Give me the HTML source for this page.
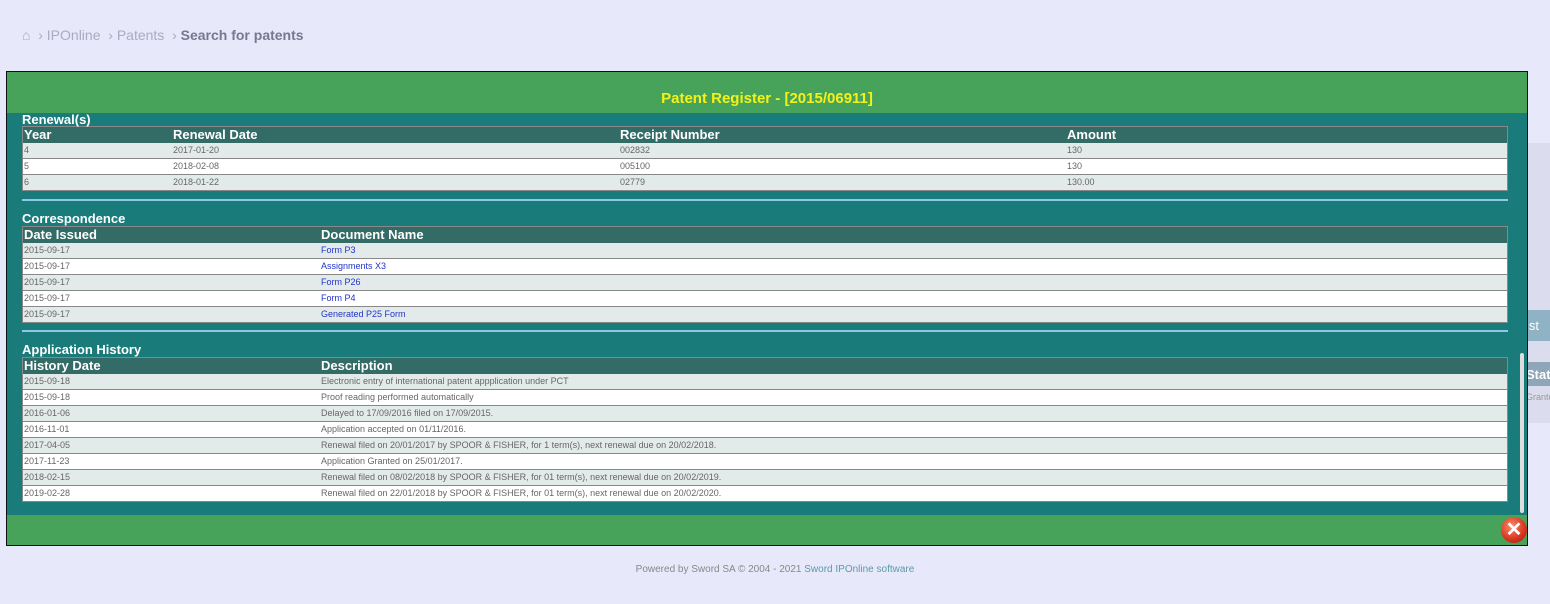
<!DOCTYPE html>
<html><head><style>
body{margin:0;width:1550px;height:604px;background:#e8e8fb;font-family:"Liberation Sans",sans-serif;position:relative;overflow:hidden}
.bc{position:absolute;left:22px;top:27px;font-size:14px;color:#aaaac0}
.bc b{color:#777790}
.side{position:absolute;left:1528px;top:143px;width:22px;height:280px;background:#dcdcef}
.modal{position:absolute;left:6px;top:71px;width:1520px;height:473px;border:1px solid #111;background:#1a7b7b}
.hd{height:41px;background:#48a35a;color:#f2f21a;font-weight:bold;font-size:15px;text-align:center;line-height:54px}
.ft{position:absolute;left:0;bottom:0;width:100%;height:30px;background:#48a35a}
.sec{position:absolute;left:15px;width:1486px;color:#fff}
h4{margin:0;font-size:13px;height:12px;line-height:12px}
table{width:100%;border-collapse:collapse;border:1px solid #888;font-size:9px;color:#666}
th{background:#336b66;color:#fff;font-size:13px;text-align:left;height:16px;padding:0 1px;line-height:16px}
td{height:15px;border-bottom:1px solid #888;padding:0 1px;line-height:15px;background:#e3ebea}
tr:nth-child(odd) td{background:#fff}
a{color:#2233cc;text-decoration:none}
.hr{position:absolute;left:15px;width:1486px;height:2px;background:#8ec8e8}
.x{position:absolute;right:0px;bottom:2px;width:26px;height:26px;border-radius:50%;background:radial-gradient(circle at 40% 35%,#ff8a6a,#d6321c 60%,#a01a10);color:#fff;font-weight:bold;font-size:20px;text-align:center;line-height:26px}
.sb{position:absolute;left:1513px;top:281px;width:4px;height:160px;background:#ddd;border-radius:2px}
.foot{position:absolute;top:564px;width:100%;text-align:center;font-size:10px;color:#888}
.foot span{color:#5a9aaa}
</style></head><body>
<div class="bc">&#8962; &nbsp;›&nbsp;IPOnline &nbsp;›&nbsp;Patents &nbsp;›&nbsp;<b>Search for patents</b></div>
<div class="side"></div>
<div style="position:absolute;left:1526px;top:310px;width:24px;height:31px;background:#8fb3c4;color:#fff;font-size:13px;line-height:31px">ist</div>
<div style="position:absolute;left:1526px;top:362px;width:24px;height:24px;background:#8fa5b8;color:#fff;font-weight:bold;font-size:13px;line-height:26px">Stat</div>
<div style="position:absolute;left:1526px;top:392px;font-size:9px;color:#999">Grante</div>
<div class="modal">
<div class="hd">Patent Register - [2015/06911]</div>
<div class="sec" style="top:42px"><h4>Renewal(s)</h4>
<table><tr><th style="width:147px">Year</th><th style="width:445px">Renewal Date</th><th style="width:445px">Receipt Number</th><th>Amount</th></tr>
<tr><td>4</td><td>2017-01-20</td><td>002832</td><td>130</td></tr>
<tr><td>5</td><td>2018-02-08</td><td>005100</td><td>130</td></tr>
<tr><td>6</td><td>2018-01-22</td><td>02779</td><td>130.00</td></tr></table></div>
<div class="hr" style="top:127px"></div>
<div class="sec" style="top:139px"><h4 style="height:15px;line-height:15px">Correspondence</h4>
<table><tr><th style="width:295px">Date Issued</th><th>Document Name</th></tr>
<tr><td>2015-09-17</td><td><a>Form P3</a></td></tr>
<tr><td>2015-09-17</td><td><a>Assignments X3</a></td></tr>
<tr><td>2015-09-17</td><td><a>Form P26</a></td></tr>
<tr><td>2015-09-17</td><td><a>Form P4</a></td></tr>
<tr><td>2015-09-17</td><td><a>Generated P25 Form</a></td></tr></table></div>
<div class="hr" style="top:258px"></div>
<div class="sec" style="top:270px"><h4 style="height:15px;line-height:15px">Application History</h4>
<table><tr><th style="width:295px">History Date</th><th>Description</th></tr>
<tr><td>2015-09-18</td><td>Electronic entry of international patent appplication under PCT</td></tr>
<tr><td>2015-09-18</td><td>Proof reading performed automatically</td></tr>
<tr><td>2016-01-06</td><td>Delayed to 17/09/2016 filed on 17/09/2015.</td></tr>
<tr><td>2016-11-01</td><td>Application accepted on 01/11/2016.</td></tr>
<tr><td>2017-04-05</td><td>Renewal filed on 20/01/2017 by SPOOR &amp; FISHER, for 1 term(s), next renewal due on 20/02/2018.</td></tr>
<tr><td>2017-11-23</td><td>Application Granted on 25/01/2017.</td></tr>
<tr><td>2018-02-15</td><td>Renewal filed on 08/02/2018 by SPOOR &amp; FISHER, for 01 term(s), next renewal due on 20/02/2019.</td></tr>
<tr><td>2019-02-28</td><td>Renewal filed on 22/01/2018 by SPOOR &amp; FISHER, for 01 term(s), next renewal due on 20/02/2020.</td></tr></table></div>
<div class="sb"></div>
<div class="ft"><div class="x">✕</div></div>
</div>
<div class="foot">Powered by Sword SA © 2004 - 2021 <span>Sword IPOnline software</span></div>
</body></html>
